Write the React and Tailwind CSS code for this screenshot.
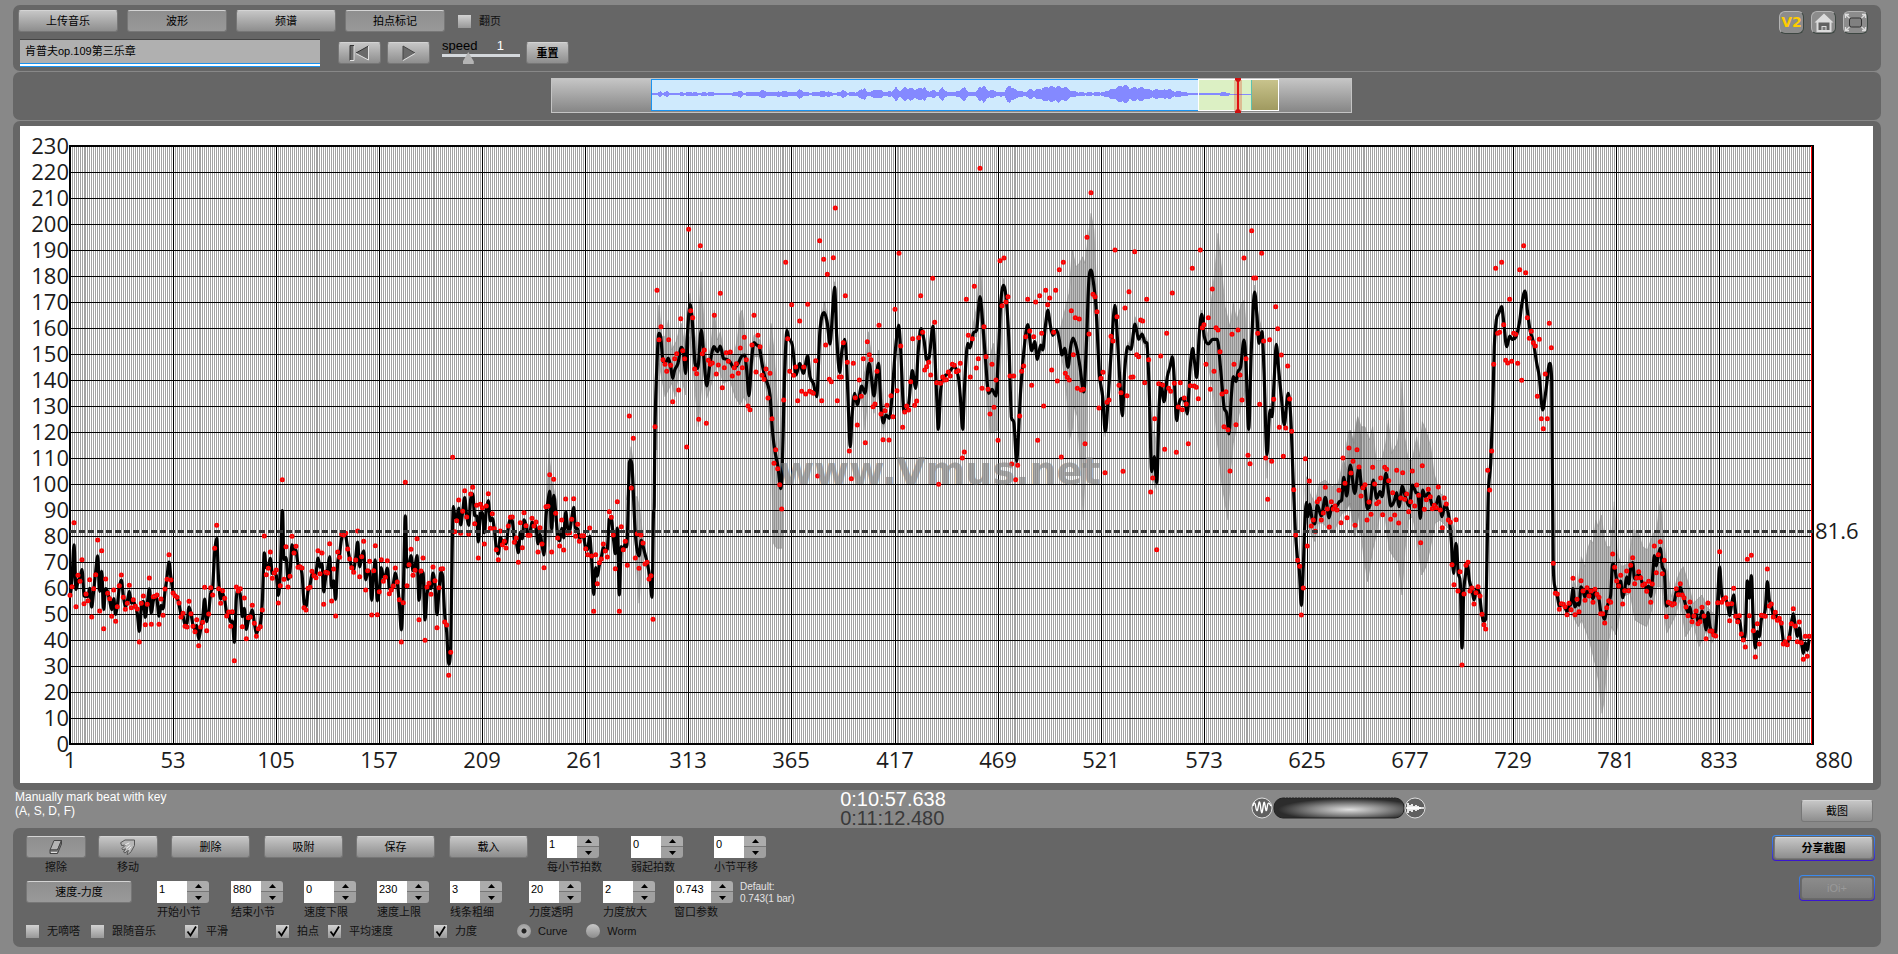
import React, { useState } from "react";

const CJK = "font-['Liberation_Sans','Noto_Sans_CJK_SC',sans-serif]";

/* ---------- chart data ---------- */

// Recorded points are kept in thirds of a chart unit, relative to an origin.
function at(ox, oy, text) {
  return text
    .trim()
    .split(/\s+/)
    .map((pair) => {
      const [x, y] = pair.split(",").map(Number);
      return [ox + x / 3, oy + y / 3];
    });
}

const beatsA = at(20, 480, `150,346 156,320 162,128 168,380 174,286 180,304 186,239 192,371 198,342 204,362 209,299 215,411 221,326 227,284 233,180 239,393 245,212 251,446 257,297 263,340 269,356 275,409 281,330 287,424 292,380 298,317 304,285 310,352 316,388 322,370 328,316 334,383 340,359 346,379 352,387 358,486 364,370 370,348 376,434 382,373 388,294 394,433 400,350 405,349 411,345 417,433 423,357 429,406 435,327 441,298 447,224 453,300 459,339 465,347 471,352 477,369 483,411 489,400 495,439 501,441 507,364 513,401 519,439 525,455 530,419 536,497 542,441 548,427 554,322 560,452 566,402 572,323 578,345 584,205 590,136 596,326 602,370 608,332 614,355 620,408 626,396 632,439 637,395 643,542 649,321 655,333 661,326 667,440 673,354 679,476 685,413 691,411 697,376 703,430 709,469 715,446 721,440 727,390 733,168 739,284 745,265 751,216 757,295 763,279 769,270 775,369 781,317 787,-1 792,298 798,200 804,321 810,289 816,169 822,219 828,199 834,262 840,260 846,264 852,383 858,390 864,325 870,322 876,274 882,287 888,293 894,212 900,281 906,219 911,373 917,277 923,279 929,191 935,363 941,267 947,408 953,216 959,232 965,163 971,165 977,160 983,207 989,237 995,263 1001,277 1007,240 1013,153 1019,290 1025,230 1031,184 1037,330 1043,272 1049,244 1055,405 1061,272 1066,197 1072,404 1078,335 1084,239 1090,304 1096,292 1102,242 1108,341 1114,330 1120,318 1126,264 1132,306 1138,359 1144,486 1150,368 1156,7 1161,317 1167,254 1173,208 1179,286 1185,271 1191,176 1197,419 1203,273 1209,234 1215,481 1221,321 1227,310 1233,343 1239,261 1245,302 1251,443 1257,323 1263,267 1268,266 1274,426 1280,435 1286,586 1292,517`);

const beatsB = at(440, 400, `38,172 44,395 50,362 56,300 62,400 68,334 74,272 80,351 86,402 92,282 98,262 104,371 110,316 115,474 121,313 127,323 133,432 139,318 145,281 151,385 157,341 163,386 169,449 175,479 181,393 187,434 193,424 198,444 205,378 211,352 217,351 223,427 229,414 235,487 241,368 247,443 252,338 258,377 264,406 270,406 276,355 282,378 288,366 294,456 300,383 306,432 312,503 318,320 324,319 329,224 335,456 341,238 347,340 353,414 359,438 365,360 371,450 377,297 383,400 389,398 395,358 401,296 407,409 413,373 418,424 425,407 431,407 437,446 443,464 449,384 455,468 461,634 467,464 472,551 478,488 484,477 490,432 496,453 502,471 508,335 514,352 520,405 526,506 532,305 538,634`);

const beatsC = at(440, 400, `544,380 550,449 556,424 562,496 568,48 574,264 580,115 586,474 592,401 597,505 603,405 609,429 615,492 621,487 627,537 633,527 639,658 645,80`);

const beatsD = at(640, 150, `51,421 57,569 63,530 69,629 75,643 80,664 86,569 92,646 98,755 104,626 110,611 116,720 122,506 128,602 134,626 140,891 146,238 152,482 158,503 164,657 170,671 176,808 181,287 187,611 193,600 199,820 205,631 211,643 217,639 223,496 229,672 235,645 241,430 247,713 253,653 259,608 265,634 271,606 277,678 283,653 289,641 295,670 301,594 307,653 313,562 319,629 324,768 330,779 336,585 342,496 348,666 354,556 360,590 366,676 372,688 378,657 384,744 390,670 396,806 402,940 407,899 413,956 419,1004 425,1077 431,750 437,337 443,566 449,664 455,464 461,676 467,651 473,752 479,513 485,724 491,651 497,732 503,463 509,724 515,727 520,730 527,632 533,978 539,272 545,752 551,328 557,585 562,373 568,688 574,695 580,323 586,174 592,752 598,681 604,681 610,578 616,437 622,637 628,903 634,986 640,640 646,743 652,825 658,690 664,739 670,626 676,878 682,575 688,614 693,629 699,770 705,762 711,664 717,526 723,792 729,869 735,782 741,766 747,870 753,737 759,800 765,478 771,722 777,310 782,588 788,832 794,786 800,768 806,780 812,695 818,566 824,766 830,753 836,563 842,437 848,547 854,660 860,650 866,637 872,675 878,385 884,517 890,698 896,1003 902,700 908,681 914,690 919,689 925,666 931,678 937,643 943,646 949,665 955,662 961,640 967,924 973,906 979,448 985,556 991,681 997,566 1003,409 1009,654 1015,626 1020,55 1026,715 1032,530 1038,620 1044,718 1050,792 1056,643 1062,772 1068,690 1074,871 1080,332 1086,467 1092,324 1098,456 1104,440 1110,678 1115,942 1121,678 1127,989 1133,946 1139,798 1145,664 1151,648 1157,560 1163,448 1169,543 1175,706 1181,560 1187,456 1193,871 1199,437 1205,550 1211,768 1217,421 1223,464 1229,444 1235,660 1241,547 1247,421 1252,693 1258,359 1264,921 1270,337 1276,670 1282,682 1288,690 1294,482 1300,614 1306,503 1312,715 1318,507`);

const beatsE = at(1060, 150, `64,720 70,718 75,881 81,262 87,552 93,128 99,433 105,440 111,485 117,774 123,685 129,667 135,968 141,757 147,750 153,559 159,573 165,300 171,500 177,706 183,728 189,964 195,474 201,737 207,425 213,682 219,681 224,305 230,614 236,620 242,510 248,513 254,698 260,448 266,629 272,1026 278,984 284,806 290,1199 296,701 302,618 308,705 314,898 320,550 326,715 332,724 337,429 343,700 349,907 355,771 361,698 367,779 373,744 379,762 385,881 391,707 397,355 403,708 409,712 415,746 421,300 427,533 432,524 438,643 445,503 451,718 457,417 462,664 468,533 474,540 480,605 486,732 492,830 498,725 504,839 510,963 516,553 522,643 528,824 534,540 540,675 546,750 552,324 558,626 564,916 570,941 575,242 581,384 587,384 593,550 599,763 605,310 611,573 617,924 623,1048 629,569 635,934 641,748 647,470 653,536 658,832 664,615 670,919 677,834 683,648 689,747 695,844 701,1019 707,1155 713,1231 719,1249 724,1395 730,1314 736,926 742,1188 748,993 754,1128 760,1110 766,1144 772,1055 778,1047 784,1110 790,1089 796,1012 802,1077 808,1131 814,1055 820,1077 825,1068 831,1080 837,1021 843,1118 849,924 855,1000 861,1103 867,894 873,969 879,934 885,1126 891,899 897,951`);

const beatsF = at(1340, 230, `63,798 69,773 75,764 81,870 87,816 93,853 98,712 104,762 110,821 116,816 122,744 128,854 134,712 140,718 146,752 152,868 158,788 164,855 170,721 176,879 182,804 188,728 194,808 200,792 206,845 212,815 217,723 224,828 230,765 236,796 242,938 247,707 253,838 259,809 265,778 271,800 277,836 283,826 289,833 295,771 301,840 307,893 313,804 319,822 325,870 331,877 336,1004 342,1064 348,869 354,1083 360,1025 366,1305 372,1092 378,1006 384,997 390,1083 396,1074 402,1122 408,1088 414,1070 420,1098 426,1153 432,1184 437,1197 443,721 449,780 455,663 461,403 467,115 473,310 479,307 485,97 491,284 497,391 503,399 509,208 515,394 521,310 527,313 533,400 539,119 545,451 551,47 557,128 562,263 568,325 574,304 580,338 586,348 592,499 598,328 604,566 610,596 616,432 622,566 628,280 634,353`);

const beatsG = at(1540, 500, `40,190 46,280 52,282 58,328 64,311 70,313 75,320 81,344 87,310 93,329 99,235 105,344 111,298 117,335 123,242 129,273 135,301 141,263 147,288 153,273 159,307 165,268 171,283 177,292 182,341 188,341 194,369 200,323 206,302 212,307 218,162 224,202 230,243 236,258 242,226 248,312 254,272 260,213 266,272 272,196 278,173 284,251 290,234 296,215 302,233 308,256 314,252 320,274 326,244 332,307 337,252 343,138 349,218 355,164 361,125 367,221 373,181 379,350 385,307 391,310 397,315 403,311 409,266 415,284 421,251 427,285 432,293 438,321 444,347 450,306 456,365 462,348 468,333 474,371 480,365 486,322 492,348 498,416 504,309 510,393 516,393 521,405 527,408 533,308 539,155 545,307 551,298 557,293 563,312 569,362 575,311 581,265 587,349 593,365 598,347 604,402 610,420 616,441 622,178 628,347 634,166 640,392 646,471 652,371 658,432 664,346 670,347 676,349 682,207 688,318 694,312 700,351 706,337 712,361 718,355 724,369 730,432 736,425 742,434 748,414 754,371 760,326 766,378 772,425 778,366 784,428 790,478 796,409 802,469 808,409`);

const beats = [beatsA, beatsB, beatsC, beatsD, beatsE, beatsF, beatsG].flat();

function smooth(points) {
  return points.map(([x, y], i) => {
    const before = points[i - 1] ? points[i - 1][1] : y;
    const after = points[i + 1] ? points[i + 1][1] : y;
    return [x, 0.7 * y + 0.15 * (before + after)];
  });
}

const curve = [
  ...smooth(beatsA).slice(0, -1),
  ...at(440, 400, `32,740 36,480 40,320 44,345`),
  ...smooth(beatsB).slice(2),
  ...at(440, 400, `544,440 550,450 556,430 560,440 568,190 571,180 576,195 586,400 597,468 604,420 612,450 622,490 630,535 636,592 641,330`),
  ...at(640, 150, `42,1080 45,830 50,660 57,550 62,560 70,635 78,635 85,624 92,650 98,685 104,660 114,640 124,592 130,605 137,670 142,560 150,464 156,500 165,640 173,655 184,540 190,600 200,708 210,640 222,590 232,605 241,588 250,625 260,628 270,635 282,655 295,640 304,620 314,615 320,660 327,737 334,640 342,578 350,585 358,590 366,640 374,680 382,700 390,735 398,850 406,910 414,950 422,1016 427,950 433,700 441,542 446,565 457,585 468,675 479,640 490,670 503,618 510,680 520,700 530,740 540,540 553,488 562,520 570,582 578,480 584,412 590,560 599,668 606,600 614,568 620,640 626,800 631,890 636,800 644,730 652,764 665,708 675,730 687,640 694,680 702,738 708,690 716,640 722,760 730,819 738,795 748,805 756,740 763,640 770,560 776,525 782,600 792,786 806,760 812,700 817,662 827,715 835,600 843,536 852,570 860,630 868,620 879,528 884,600 890,740 895,838 902,720 910,685 925,670 943,650 955,680 961,740 968,838 974,700 983,580 990,594 1000,550 1010,540 1020,440 1028,520 1036,620 1046,730 1056,718 1068,738 1074,640 1082,460 1091,406 1098,440 1106,560 1114,800 1122,820 1130,934 1136,840 1142,720 1152,600 1163,524 1175,602 1184,575 1192,628 1202,585 1208,600 1216,530 1224,480 1230,520 1238,556 1250,540 1258,570`),
  ...at(1060, 150, `6,615 14,595 24,652 32,590 39,564 50,595 60,650 71,726 80,560 86,400 93,360 100,395 108,470 118,670 128,740 136,845 146,720 155,580 165,466 172,560 180,700 187,797 194,660 203,590 213,598 225,522 236,568 246,552 254,575 261,580 267,700 275,965 283,920 290,998 298,760 303,700 312,755 322,680 330,650 337,620 343,690 350,812 357,760 365,745 375,755 382,792 390,660 398,595 404,640 410,683 418,550 425,493 433,560 445,582 458,568 472,568 482,660 492,770 500,790 507,852 514,740 520,680 528,695 534,665 542,650 552,570 558,640 566,838 574,600 584,426 591,500 597,580 606,545 612,660 621,914 630,780 636,800 642,700 649,583 656,660 664,740 673,825 680,760 685,730 692,800 700,1000 706,1140 712,1220 718,1260 724,1366 730,1250 734,1130 739,1058 744,1100 749,1062 756,1105 764,1122 772,1065 784,1098 796,1042 807,1103 816,1070 828,1070 838,1055 845,1050 851,982 860,1038 871,945 884,1030`),
  ...at(1340, 230, `57,711 66,775 74,770 82,836 90,825 100,750 110,805 120,785 126,800 138,730 146,790 153,828 162,815 170,788 177,830 187,768 196,800 208,828 217,765 228,788 234,790 241,865 248,780 256,800 266,788 276,825 287,826 296,800 306,860 315,825 325,850 333,920 341,1030 348,940 355,1030 361,1060 366,1254 371,1090 377,1030 382,1000 388,1050 396,1080 402,1110 410,1075 418,1090 424,1140 431,1174 437,1168 441,980 445,790 452,700 458,540 463,350 469,270 476,250 485,230 491,275 500,350 509,318 517,328 528,320 538,280 546,220 555,183 562,240 570,300 580,335 590,400 598,440 608,540 618,480 629,400 635,450 637,700`),
  ...smooth(beatsG),
];

const bands = [
  at(440, 400, `318,320 327,160 337,250 350,300 350,350 335,380 327,440 318,360`),
  at(440, 400, `560,300 567,180 573,140 579,180 584,290 592,290 600,330 609,420 609,460 597,610 588,480 576,200 566,260`),
  at(640, 150, `50,560 57,465 65,560 75,560 85,510 95,600 108,575 124,520 135,590 150,430 160,520 172,600 183,365 192,520 200,640 212,590 223,480 232,570 241,545 250,600 265,605 280,620 292,570 300,490 307,480 316,560 325,650 342,555 360,570 375,640 385,680 393,520 402,600 412,760 420,900 430,640 441,530 441,600 430,900 425,1195 410,1195 400,1180 392,850 380,730 360,620 342,620 327,770 312,740 300,765 285,740 270,690 250,700 232,640 215,700 200,745 190,650 175,830 165,720 150,560 137,735 118,660 105,740 95,700 75,740 57,640 50,900`),
  at(640, 150, `530,740 540,530 553,455 565,510 572,570 584,395 592,540 599,660 584,430 570,590 553,500 540,560`),
  at(640, 150, `662,720 675,660 685,545 695,620 705,690 716,600 730,760 740,780 730,850 715,680 702,790 688,680 675,840 668,760`),
  at(640, 150, `990,580 1000,520 1010,470 1020,330 1030,470 1045,640 1060,580 1070,640 1091,385 1100,440 1091,420 1074,840 1050,850 1030,620 1018,460 1010,560 1000,560`),
  at(1060, 150, `0,540 15,480 27,430 37,300 48,350 58,340 68,320 75,340 85,260 93,190 102,240 110,420 122,640 136,860 128,790 120,700 105,500 93,400 85,560 78,880 70,1110 62,960 52,800 43,770 37,840 28,870 20,740 8,640 0,600`),
  at(1060, 150, `200,590 215,560 225,500 240,540 262,570 275,860 283,840 292,900 290,1020 275,980 262,600 225,540 205,610`),
  at(1060, 150, `415,600 425,480 445,560 455,440 465,360 474,250 485,360 495,470 510,530 520,460 530,510 545,460 553,450 560,560 566,850 555,720 540,780 530,830 520,880 512,960 504,1110 495,1060 485,1000 470,860 460,730 440,620 425,530`),
  at(1060, 150, `575,560 584,405 592,480 606,540 621,890 632,760 621,985 612,700 604,560 590,520`),
  at(1060, 150, `735,1020 740,980 750,1030 765,1060 778,1000 796,990 815,1010 835,1000 850,930 862,960 872,840 880,870 893,800 900,850 905,860 900,1080 885,1160 870,1060 855,1080 840,1100 825,1140 805,1140 790,1120 775,1120 765,1175 752,1150 740,1120`),
  at(1340, 230, `62,620 64,590 75,590 88,630 98,590 108,690 125,690 137,640 145,570 155,670 172,640 178,600 186,455 194,620 205,690 217,690 230,620 238,680 247,575 258,600 272,650 282,730 300,790 315,800 330,860 345,900 345,1000 330,900 300,870 285,880 270,960 258,1010 245,1035 232,940 218,860 205,870 195,960 186,1095 175,1000 160,980 148,960 135,860 120,850 110,910 98,960 83,1055 70,970 62,900`),
  at(1340, 230, `10,740 20,640 28,600 42,640 53,560 64,590 64,920 55,850 45,920 30,820 15,850`),
  at(1540, 500, `90,310 100,240 112,270 124,170 135,200 142,150 152,120 160,130 167,60 175,80 184,45 192,110 200,140 212,140 223,5 232,160 245,200 265,190 279,90 295,95 308,140 322,150 340,100 350,90 361,0 368,90 380,200 395,290 410,240 422,210 430,200 445,250 460,310 486,285 500,320 530,350 530,400 515,430 500,390 477,440 460,370 437,410 420,300 405,350 380,400 365,260 350,260 335,330 320,380 300,370 285,360 270,280 250,290 228,405 215,380 205,430 193,600 186,640 175,540 165,490 150,430 140,400 125,360 115,380 100,350 90,320`),
];

const toLine = (points) => "M" + points.map(([x, y]) => `${x.toFixed(1)} ${y.toFixed(1)}`).join("L");

// Cubic segments with level tangents at local extremes.
function toCurve(points) {
  const slope = points.map(([, y], i) => {
    const before = points[i - 1];
    const after = points[i + 1];
    if (!before || !after || (y - before[1]) * (after[1] - y) <= 0) return 0;
    return (after[1] - before[1]) / Math.max(0.5, after[0] - before[0]);
  });
  let d = `M${points[0][0].toFixed(1)} ${points[0][1].toFixed(1)}`;
  for (let i = 1; i < points.length; i++) {
    const [x0, y0] = points[i - 1];
    const [x1, y1] = points[i];
    const h = (x1 - x0) / 3;
    const limit = Math.abs(y1 - y0);
    const c0 = Math.max(-limit, Math.min(limit, slope[i - 1] * h));
    const c1 = Math.max(-limit, Math.min(limit, slope[i] * h));
    d += `C${(x0 + h).toFixed(1)} ${(y0 + c0).toFixed(1)} ${(x1 - h).toFixed(1)} ${(y1 - c1).toFixed(1)} ${x1.toFixed(1)} ${y1.toFixed(1)}`;
  }
  return d;
}

const barX = (bar) => Math.floor(70.125 + (bar - 1) * 1.98294);
const bpmY = (bpm) => Math.round(743.5 - bpm * 2.6);

const barLines = Array.from({ length: 880 }, (_, i) => `M${barX(i + 1)} 146h1v598h-1z`).join("");
const majorBars = Array.from({ length: 17 }, (_, i) => 1 + i * 52);
const bpmTicks = Array.from({ length: 24 }, (_, i) => i * 10);
const dots = beats.map(([x, y]) => `M${x.toFixed(1)} ${y.toFixed(1)}h0`).join("");

function TempoChart() {
  return (
    <svg viewBox="20 126 1853 657" className="block h-auto w-full bg-white font-['Open_Sans','Noto_Sans',sans-serif] text-[22px]" role="img" aria-label="速度-力度">
      <path d={barLines} fill="#a2a2a2" shapeRendering="crispEdges" />
      {bands.map((band, i) => (
        <path key={i} d={toLine(band) + "Z"} fill="#808080" fillOpacity="0.5" stroke="#808080" strokeOpacity="0.4" />
      ))}
      <g fill="#000" shapeRendering="crispEdges">
        {bpmTicks.map((v) => (
          <rect key={v} x="70" y={bpmY(v)} width="1742" height="1" />
        ))}
        {majorBars.map((b) => (
          <rect key={b} x={barX(b)} y="146" width="1" height="598" />
        ))}
      </g>
      <path d="M70 146V744H1813V146Z" fill="none" stroke="#000" strokeWidth="2" shapeRendering="crispEdges" />
      <path d={toCurve(curve)} fill="none" stroke="#000" strokeWidth="3.2" strokeLinejoin="round" />
      <path d={dots} stroke="#f00" strokeWidth="5" strokeLinecap="round" />
      <path d={dots} stroke="#c23a3a" strokeWidth="1.4" strokeLinecap="round" />
      <rect x="1811" y="146" width="1" height="598" fill="#f00" />
      <path d="M70 531.5H1816" stroke="#333" strokeWidth="3" strokeDasharray="6 3" />
      <text x="779" y="484" className="font-['DejaVu_Sans',sans-serif] text-[38px] font-bold" fill="#808080" fillOpacity="0.65">
        www.Vmus.net
      </text>
      <g fill="#1c1c1c">
        {bpmTicks.map((v) => (
          <text key={v} x="69" y={bpmY(v) + 8} textAnchor="end">{v}</text>
        ))}
        {majorBars.map((b) => (
          <text key={b} x={barX(b)} y="768" textAnchor="middle">{b}</text>
        ))}
        <text x="1834" y="768" textAnchor="middle">880</text>
        <text x="1815" y="539">81.6</text>
      </g>
    </svg>
  );
}

/* ---------- overview strip ---------- */

const envelope = `212,3 222,4 228,8 234,4 240,9 246,4 260,4 290,6 300,4 325,6 340,3 365,4 380,10 385,4 400,6 410,5 418,12 425,10 435,5 450,7 460,9 468,8 480,5 490,14 498,8 510,4 525,7 540,9 550,6 560,3 572,12 580,5 600,6 613,20 618,6 640,14 650,6 665,8 672,20 680,10 690,20 700,18 708,14 716,16 726,22 732,8 745,12 752,6 761,20 770,6 785,6 803,20 810,6 825,8 832,22 838,26 845,12 855,12 865,6 878,8 884,22 890,28 896,14 905,10 915,6 925,14 935,12 945,16 955,20 962,24 970,20 978,26 985,18 990,24 1000,12 1010,8 1020,5 1050,5 1065,6 1080,14 1090,20 1104,28 1115,18 1130,20 1142,18 1155,12 1170,14 1178,12 1188,16 1195,9 1210,8 1225,4 1240,3 1260,2 1275,3 1295,6 1300,5 1305,1 1343,1`
  .split(" ")
  .map((p) => p.split(",").map(Number))
  .map(([x, a]) => [(x - 22) / 1.889, a / 3]);

function amplitude(x) {
  const i = envelope.findIndex(([ex]) => ex >= x);
  if (i <= 0) return 1;
  const [x0, a0] = envelope[i - 1];
  const [x1, a1] = envelope[i];
  const noise = 0.75 + 0.35 * Math.abs(Math.sin(x * 12.9898));
  return Math.max(0.5, (a0 + ((a1 - a0) * (x - x0)) / (x1 - x0)) * noise);
}

const wave = Array.from({ length: 599 }, (_, i) => {
  const a = amplitude(i + 101);
  return `M${i + 101} ${(16 - a).toFixed(1)}h1v${(2 * a).toFixed(1)}h-1z`;
}).join("");

function Overview() {
  return (
    <svg viewBox="0 0 801 36" className="h-9 w-[801px]" role="img" aria-label="音乐总览">
      <defs>
        <linearGradient id="trackFill" x1="0" y1="0" x2="0" y2="1">
          <stop offset="0" stopColor="#c6c6c6" />
          <stop offset="1" stopColor="#858585" />
        </linearGradient>
        <linearGradient id="oliveFill" x1="0" y1="0" x2="0" y2="1">
          <stop offset="0" stopColor="#c8c38c" />
          <stop offset="1" stopColor="#a09a60" />
        </linearGradient>
      </defs>
      <rect x="0.5" y="0.5" width="800" height="34" fill="url(#trackFill)" stroke="#c4c4c4" />
      <rect x="100.5" y="1.5" width="599" height="31" fill="#cfeafd" stroke="#1a93f0" />
      <rect x="648" y="2" width="52" height="30" fill="#dcf0c4" />
      <rect x="700" y="2" width="27" height="30" fill="url(#oliveFill)" />
      <path d={wave} fill="#8489ff" shapeRendering="crispEdges" />
      <rect x="700" y="2" width="1" height="30" fill="#5cc2b0" />
      <rect x="647.5" y="1.5" width="80" height="31" fill="none" stroke="#fff" />
      <rect x="683" y="2" width="8" height="31" fill="#e02000" opacity="0.25" />
      <rect x="686" y="1" width="2" height="33" fill="#e01010" />
      <path d="M684 0h6v2l-2 2h-2l-2-2zM684 35h6v-2l-2-2h-2l-2 2z" fill="#d01010" />
    </svg>
  );
}

/* ---------- controls ---------- */

const FACE = "flex items-center justify-center rounded-[3px] border border-[#777] border-t-[#d4d4d4] text-black";
const RAISED = "bg-linear-to-b from-[#c6c6c6] to-[#8e8e8e]";
const PRESSED = "bg-linear-to-b from-[#8f8f8f] to-[#999] border-t-[#999]";

function Button({ children, pressed = false, className = "", ...rest }) {
  return (
    <button type="button" className={`${FACE} ${pressed ? PRESSED : RAISED} h-[22px] ${className}`} {...rest}>
      {children}
    </button>
  );
}

function Check({ label, checked = false, className = "" }) {
  return (
    <label className={`flex items-center gap-2 ${className}`}>
      <span className="relative flex size-[13px]">
        <input type="checkbox" defaultChecked={checked} className="peer size-[13px] appearance-none bg-linear-to-b from-[#d2d2d2] to-[#989898]" />
        <svg viewBox="0 0 13 13" className="pointer-events-none absolute inset-0 hidden size-[13px] peer-checked:block">
          <path d="M2.5 6.5 5.5 10.5 11 1.5" fill="none" stroke="#000" strokeWidth="1.8" />
        </svg>
      </span>
      {label}
    </label>
  );
}

function Radio({ label, checked = false, className = "" }) {
  return (
    <label className={`flex items-center gap-[7px] ${className}`}>
      <input
        type="radio"
        name="view"
        defaultChecked={checked}
        className="size-[14px] appearance-none rounded-full bg-linear-to-b from-[#c8c8c8] to-[#8c8c8c] checked:bg-[radial-gradient(circle,#222_0_2px,#b0b0b0_3px,#949494)]"
      />
      {label}
    </label>
  );
}

function Spinner({ id, label, value, wide = false }) {
  const [v, setV] = useState(value);
  const step = (d) => setV((n) => String(Number(n) + d));
  return (
    <div className="flex flex-col items-start">
      <div className="flex h-[22px]">
        <input
          id={id}
          value={v}
          onChange={(e) => setV(e.target.value)}
          className={`${wide ? "w-[37px]" : "w-[30px]"} h-[22px] bg-white pb-[6px] pl-[2px] text-[11px] leading-4 text-black`}
        />
        <div className="flex w-[22px] flex-col overflow-hidden rounded-r-[3px]">
          <button type="button" aria-label={`${label} +`} onClick={() => step(1)} className="flex h-[11px] items-center justify-center border-b border-[#777] bg-[#acacac]">
            <svg viewBox="0 0 7 4" className="h-1 w-[7px]"><path d="M0 4 3.5 0 7 4z" /></svg>
          </button>
          <button type="button" aria-label={`${label} -`} onClick={() => step(-1)} className="flex h-[11px] items-center justify-center bg-[#a0a0a0]">
            <svg viewBox="0 0 7 4" className="h-1 w-[7px]"><path d="M0 0 3.5 4 7 0z" /></svg>
          </button>
        </div>
      </div>
      <label htmlFor={id} className="leading-[18px] whitespace-nowrap">{label}</label>
    </div>
  );
}

function ToolButton({ id, label, pressed, children }) {
  return (
    <div className="flex w-[60px] flex-col items-center">
      <Button id={id} pressed={pressed} aria-label={label} className="w-[60px]">{children}</Button>
      <label htmlFor={id} className="leading-[18px]">{label}</label>
    </div>
  );
}

const ICON_TILE = "flex h-[23px] w-[25px] items-center justify-center rounded-[6px] border border-[#3d4742] border-t-[#b4b4b4] border-l-[#b4b4b4] bg-[#8c8c8c]";

function TopIcons() {
  return (
    <div className="flex gap-[7px]">
      <button type="button" className={`${ICON_TILE} font-['DejaVu_Sans',sans-serif] text-[14px] font-bold text-[#ffcc00]`}>V2</button>
      <a href="#home" aria-label="Home" className={ICON_TILE}>
        <svg viewBox="0 0 20 20" className="size-5">
          <path d="M10 0.500 19.500 9.500H17.500V19H2.500V9.500H0.500z" fill="#dcdcdc" />
          <path d="M4.500 9.500h11V17h-3.500v-4h-4v4H4.500z" fill="#606060" />
          <path d="M7.500 13h5v4h-5z" fill="#dcdcdc" />
          <path d="M8.500 14h3v3h-3z" fill="#777" />
        </svg>
      </a>
      <button type="button" aria-label="Fullscreen" className={ICON_TILE}>
        <svg viewBox="0 0 23 21" className="h-[21px] w-[23px]" fill="none">
          <rect x="5.500" y="6" width="12" height="9" rx="2" fill="#808080" stroke="#333" />
          <path d="M1.500 6V2.500H5M1.500 2.500 5.500 6M18 2.500h3.500V6M21.500 2.500 17.500 6M1.500 15v3.500H5M1.500 18.500l4-3.500M18 18.500h3.500V15M21.500 18.500l-4-3.500" stroke="#ddd" strokeWidth="1.300" />
        </svg>
      </button>
    </div>
  );
}

function ZoomKnob() {
  return (
    <svg viewBox="0 0 176 24" className="h-6 w-44" role="img" aria-label="缩放">
      <defs>
        <radialGradient id="knob" cx="0.58" cy="0.58" r="0.55">
          <stop offset="0" stopColor="#e0e0e0" />
          <stop offset="0.5" stopColor="#8a8a8a" />
          <stop offset="1" stopColor="#2c2c2c" />
        </radialGradient>
      </defs>
      <circle cx="11" cy="12" r="10" fill="#606060" stroke="#ddd" />
      <path d="M2 10c.6-4 2-4 2.600 0s1.600 7 2.400 2 1.400-9 2.300-3 1.400 11 2.300 5 1.500-11 2.400-5 1.300 8 2.200 2 2-4 3.800-1" fill="none" stroke="#fff" strokeWidth="1.400" />
      <rect x="23" y="2" width="130" height="20" rx="9" fill="url(#knob)" stroke="#222" />
      <path d="M34 1.500H143" stroke="#777" strokeDasharray="1 2" />
      <circle cx="164" cy="12" r="10" fill="#606060" stroke="#ddd" />
      <path d="M155 12h18M157 7v10M159 9v6M161 8v8M163 10v4M165 9v6M167 10v4M169 11v2" stroke="#fff" strokeWidth="1.700" />
    </svg>
  );
}

const PANEL = "rounded-[7px] bg-[#666]";

export default function App() {
  return (
    <div className={`flex min-h-screen flex-col bg-[#888] pt-[5px] pr-[17px] pb-[7px] pl-[13px] text-[11px] text-[#111] ${CJK}`}>
      <header className={`${PANEL} flex h-[66px] justify-between pt-[5px] pr-[13px] pl-[5px]`}>
        <div className="flex flex-col gap-[7px]">
          <div className="flex items-center gap-[9px]">
            <Button className="w-[100px]">上传音乐</Button>
            <Button pressed className="w-[100px]">波形</Button>
            <Button className="w-[100px]">频谱</Button>
            <Button pressed className="w-[100px]">拍点标记</Button>
            <Check label="翻页" className="ml-1" />
          </div>
          <div className="flex">
            <div className="ml-[2px] h-7 w-[300px] border-t border-[#444] bg-[#b0b0b0]">
              <input aria-label="曲目" defaultValue="肯普夫op.109第三乐章" className="block h-[23px] w-full bg-transparent px-[5px] pb-1 text-[11px] text-black" />
              <div className="h-1 border-y border-[#1a93f0] bg-white" />
            </div>
            <div className="ml-[18px] flex gap-[6px] pt-[3px]">
              <Button aria-label="回到开头" className="w-[43px]">
                <svg viewBox="0 0 21 16" className="h-4 w-[21px]">
                  <path d="M1 0.500h4v15H1zM19.500 1v14L7 8z" fill="#6a6a6a" />
                  <path d="M1 15.500V0.500h4M7 8 19.500 1" fill="none" stroke="#333" />
                  <path d="M5 1v14.500H1M19.500 1v14L7 8.500" fill="none" stroke="#e0e0e0" />
                </svg>
              </Button>
              <Button aria-label="播放" className="w-[43px]">
                <svg viewBox="0 0 14 16" className="h-4 w-[14px]">
                  <path d="M1 1 13 8 1 15z" fill="#6a6a6a" />
                  <path d="M1 15V1l12 7" fill="none" stroke="#444" />
                  <path d="M1 15.500 13 8.500" stroke="#e0e0e0" />
                </svg>
              </Button>
            </div>
            <div className="ml-3 flex w-[78px] flex-col">
              <div className="flex justify-between pr-4 text-[13px] leading-[13px] text-black">
                <label htmlFor="speed">speed</label>
                <output htmlFor="speed" className="text-white">1</output>
              </div>
              <input
                id="speed"
                type="range"
                min="0.1"
                max="3"
                step="0.1"
                defaultValue="1"
                className="h-3 w-full appearance-none bg-[linear-gradient(#d4d8dc,#d4d8dc)] bg-[length:100%_3px] bg-[position:0_2px] bg-no-repeat [&::-webkit-slider-thumb]:h-3 [&::-webkit-slider-thumb]:w-[11px] [&::-webkit-slider-thumb]:appearance-none [&::-webkit-slider-thumb]:bg-[#b4b4b4] [&::-webkit-slider-thumb]:[clip-path:polygon(50%_0,100%_80%,100%_100%,0_100%,0_80%)]"
              />
            </div>
            <Button className="mt-[3px] ml-[6px] w-[43px] font-bold">重置</Button>
          </div>
        </div>
        <div className="pt-px">
          <TopIcons />
        </div>
      </header>

      <section className={`${PANEL} mt-px flex h-12 justify-center pt-[6px] pl-[9px]`}>
        <Overview />
      </section>

      <main className={`${PANEL} mt-px pt-[5px] pr-2 pb-[7px] pl-[7px]`}>
        <TempoChart />
      </main>

      <section className="grid h-[38px] grid-cols-[827fr_auto_927fr] pr-2">
        <p className="pl-[2px] text-[12px] leading-[14px] text-white">
          Manually mark beat with key
          <br />
          (A, S, D, F)
        </p>
        <div className="text-[20px] leading-[19px]">
          <div className="text-white">0:10:57.638</div>
          <div className="text-[#3a3a3a]">0:11:12.480</div>
        </div>
        <div className="flex items-start justify-between pt-[6px] pl-[305px]">
          <ZoomKnob />
          <Button className="mt-1 w-[72px]">截图</Button>
        </div>
      </section>

      <footer className={`${PANEL} flex h-[119px] justify-between pt-2 pr-[6px] pl-[13px]`}>
        <div>
          <div className="grid h-[45px] grid-cols-[72px_73px_93px_92px_93px_98px_84px_83px_auto]">
            <ToolButton id="erase" label="擦除" pressed>
              <svg viewBox="0 0 16 16" className="size-4" strokeLinejoin="round">
                <path d="M6 1.500h7.500L9.500 11H2z" fill="#b4b4b4" stroke="#444" />
                <path d="M13.500 1.500V5l-4 9.500H2V11h7.500z" fill="#888" stroke="#444" />
                <path d="M3 13.500h6" stroke="#ddd" />
              </svg>
            </ToolButton>
            <ToolButton id="move" label="移动">
              <svg viewBox="0 0 16 16" className="size-4" fill="#b6b6b6" stroke="#555" strokeLinecap="round">
                <path d="M1 3.500 5 1h9.500v5.500L12 11c-1 2.500-3 4-5 4.500L8.500 11 5 14l-1.500-1L6 9.500 3 11 2 9.500 5.500 6 2 6.500z" />
                <path d="M5 6 9 4M6 9.500 10 6.500M8.500 11 11 8" fill="none" stroke="#eee" />
              </svg>
            </ToolButton>
            <Button className="w-[79px]">删除</Button>
            <Button className="w-[79px]">吸附</Button>
            <Button className="w-[79px]">保存</Button>
            <Button className="w-[79px]">载入</Button>
            <Spinner id="beatsPerBar" label="每小节拍数" value="1" />
            <Spinner id="pickup" label="弱起拍数" value="0" />
            <Spinner id="shift" label="小节平移" value="0" />
          </div>
          <div className="grid h-[42px] grid-cols-[131px_74px_73px_73px_73px_79px_74px_71px_66px_auto]">
            <Button pressed className="w-[106px]">速度-力度</Button>
            <Spinner id="startBar" label="开始小节" value="1" />
            <Spinner id="endBar" label="结束小节" value="880" />
            <Spinner id="tempoMin" label="速度下限" value="0" />
            <Spinner id="tempoMax" label="速度上限" value="230" />
            <Spinner id="lineWidth" label="线条粗细" value="3" />
            <Spinner id="alpha" label="力度透明" value="20" />
            <Spinner id="gain" label="力度放大" value="2" />
            <Spinner id="windowSize" label="窗口参数" value="0.743" wide />
            <p className="text-[10px] leading-3 text-[#e4e4e4]">
              Default:
              <br />
              0.743(1 bar)
            </p>
          </div>
          <div className="flex h-4 items-center">
            <Check label="无嘀嗒" />
            <Check label="跟随音乐" className="ml-[11px]" />
            <Check label="平滑" checked className="ml-[29px]" />
            <Check label="拍点" checked className="ml-12" />
            <Check label="平均速度" checked className="ml-[9px]" />
            <Check label="力度" checked className="ml-[41px]" />
            <Radio label="Curve" checked className="ml-10" />
            <Radio label="Worm" className="ml-[19px]" />
          </div>
        </div>
        <div className="flex flex-col items-end gap-[14px]">
          <div className="-mt-px rounded-[4px] bg-linear-to-b from-[#3a8cf0] to-[#3a10d0] p-px">
            <div className="rounded-[3px] bg-[#666] p-px">
              <Button className="w-[99px] font-bold">分享截图</Button>
            </div>
          </div>
          <div className="rounded-[4px] bg-linear-to-b from-[#3a8cf0] to-[#3a10d0] p-px">
            <div className="rounded-[3px] bg-[#666] p-px">
              <button type="button" disabled className="flex h-[22px] w-[72px] items-center justify-center rounded-[3px] border border-[#6a6a6a] bg-linear-to-b from-[#8c8c8c] to-[#7a7a7a] text-[#999]">
                iOi+
              </button>
            </div>
          </div>
        </div>
      </footer>
    </div>
  );
}
